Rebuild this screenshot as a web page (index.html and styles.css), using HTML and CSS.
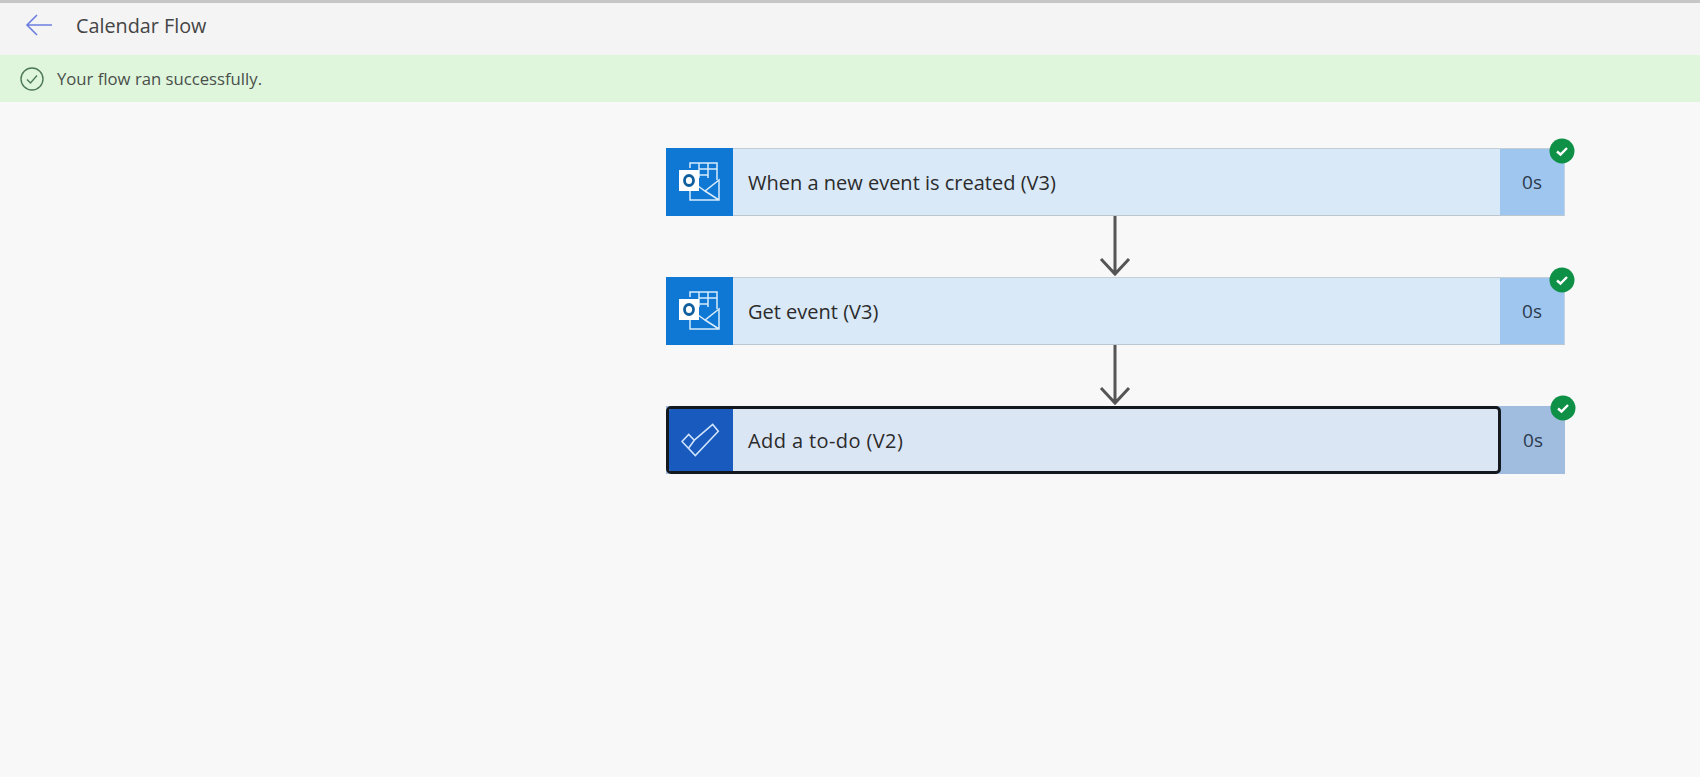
FILE: index.html
```html
<!DOCTYPE html>
<html lang="en">
<head>
<meta charset="utf-8">
<title>Calendar Flow</title>
<link rel="stylesheet" href="styles.css">
</head>
<body>
<div class="topline"></div>
<header class="header">
  <svg class="back" width="28" height="24" viewBox="0 0 28 24" fill="none" stroke="#6b7fe0" stroke-width="1.6"><path d="M27 12H2M12 2 2 12l10 10"/></svg>
  <span class="title">Calendar Flow</span>
</header>
<div class="banner">
  <svg width="24" height="24" viewBox="0 0 24 24" fill="none" stroke="#4d7a55" stroke-width="1.4"><circle cx="12" cy="12" r="11"/><path d="m7 12.500 3.500 3.500L17 8.500"/></svg>
  <span class="banner-text">Your flow ran successfully.</span>
</div>
<main class="canvas">
  <section class="flow">
    <div class="card">
      <div class="icon outlook">
        <svg width="42" height="40" viewBox="1 0 42 40" fill="none" stroke="#d8ecfb" stroke-width="1.500"><path d="M12 6V1h27v17M12 1h27M21 1v15M30 1v15M21 7h18M21 13h9"/><path d="M12 28v10h29V18L27 29l-7-5M27 29l14 9"/><rect x="1" y="8" width="20" height="21" fill="#fff" stroke="none"/><ellipse cx="11" cy="18.500" rx="4.500" ry="5" stroke="#0f5f9f" stroke-width="2.800"/></svg>
      </div>
      <div class="label">When a new event is created (V3)</div>
      <div class="time">0s</div>
      <svg class="badge" width="26" height="26" viewBox="0 0 26 26"><circle cx="13" cy="13" r="12.500" fill="#0f9047"/><path d="m8 13.500 3.500 3L18 10" fill="none" stroke="#fff" stroke-width="2.400"/></svg>
    </div>
    <svg class="arrow" width="34" height="61" viewBox="0 0 34 61" fill="none" stroke="#555" stroke-width="3"><path d="M17 0v58M3 43l14 15 14-15"/></svg>
    <div class="card">
      <div class="icon outlook">
        <svg width="42" height="40" viewBox="1 0 42 40" fill="none" stroke="#d8ecfb" stroke-width="1.500"><path d="M12 6V1h27v17M12 1h27M21 1v15M30 1v15M21 7h18M21 13h9"/><path d="M12 28v10h29V18L27 29l-7-5M27 29l14 9"/><rect x="1" y="8" width="20" height="21" fill="#fff" stroke="none"/><ellipse cx="11" cy="18.500" rx="4.500" ry="5" stroke="#0f5f9f" stroke-width="2.800"/></svg>
      </div>
      <div class="label">Get event (V3)</div>
      <div class="time">0s</div>
      <svg class="badge" width="26" height="26" viewBox="0 0 26 26"><circle cx="13" cy="13" r="12.500" fill="#0f9047"/><path d="m8 13.500 3.500 3L18 10" fill="none" stroke="#fff" stroke-width="2.400"/></svg>
    </div>
    <svg class="arrow" width="34" height="61" viewBox="0 0 34 61" fill="none" stroke="#555" stroke-width="3"><path d="M17 0v58M3 43l14 15 14-15"/></svg>
    <div class="card selected">
      <div class="main-box">
        <div class="icon todo">
          <svg width="40" height="34" viewBox="1 0 40 34" fill="none" stroke="#cfe3fa" stroke-width="1.600"><path d="M2 18.500 8.700 11.500l5.600 5.700L32.700 1.500l5.600 6.700L15.300 32.500z"/><path d="M8.700 25l5.600-7.800"/></svg>
        </div>
        <div class="label">Add a to-do (V2)</div>
      </div>
      <div class="time">0s</div>
      <svg class="badge" width="26" height="26" viewBox="0 0 26 26"><circle cx="13" cy="13" r="12.500" fill="#0f9047"/><path d="m8 13.500 3.500 3L18 10" fill="none" stroke="#fff" stroke-width="2.400"/></svg>
    </div>
  </section>
</main>
</body>
</html>
```
FILE: styles.css
```css
* { box-sizing: border-box; }
html, body { margin: 0; height: 100%; overflow: hidden; }
body {
  background: #f8f8f8;
  font-family: "Open Sans", "Liberation Sans", sans-serif;
  color: #333;
  display: flex;
  flex-direction: column;
}
.topline { height: 3px; background: #c6c6c6; flex: none; }
.header {
  height: 52px;
  flex: none;
  background: #f4f4f4;
  display: flex;
  align-items: center;
  padding: 0 0 8px 25px;
  gap: 23px;
}
.title { font-size: 19.800px; color: #444; }
.banner {
  height: 47px;
  flex: none;
  background: #dff6dd;
  display: flex;
  align-items: center;
  padding-left: 20px;
  gap: 13px;
}
.banner-text { font-size: 16.700px; color: #4a4f4a; }
.canvas { flex: 1; padding: 46px 0 0 666px; }
.flow { width: 899px; display: flex; flex-direction: column; align-items: center; }
.card {
  width: 100%;
  height: 68px;
  flex: none;
  display: flex;
  position: relative;
  background: #d9e9f8;
  border-top: 1px solid #c4ced6;
  border-bottom: 1px solid #bcc6ce;
  border-right: 1px solid #c4d4e4;
}
.icon {
  width: 67px;
  flex: none;
  display: flex;
  align-items: center;
  justify-content: center;
}
.outlook { background: #0f78d4; margin: -1px 0; }
.todo { background: #185abd; }
.label {
  flex: 1;
  display: flex;
  align-items: center;
  padding-left: 15px;
  font-size: 20px;
  color: #2b2b2b;
}
.time {
  width: 64px;
  flex: none;
  display: flex;
  align-items: center;
  justify-content: center;
  background: #9fc6ef;
  font-size: 19px;
  color: #2c3a4c;
}
.badge { position: absolute; top: -11px; right: -11px; }
.arrow { flex: none; margin-left: -2px; }
.selected { background: #a0bde0; border: 0; }
.selected .time { background: #a0bde0; }
.main-box {
  flex: 1;
  display: flex;
  background: #dbe6f5;
  border: 3px solid #14181f;
  border-radius: 5px;
  overflow: hidden;
}
.selected .label { padding-left: 15px; letter-spacing: 0.400px; }
.selected .icon { width: 64px; }
```
